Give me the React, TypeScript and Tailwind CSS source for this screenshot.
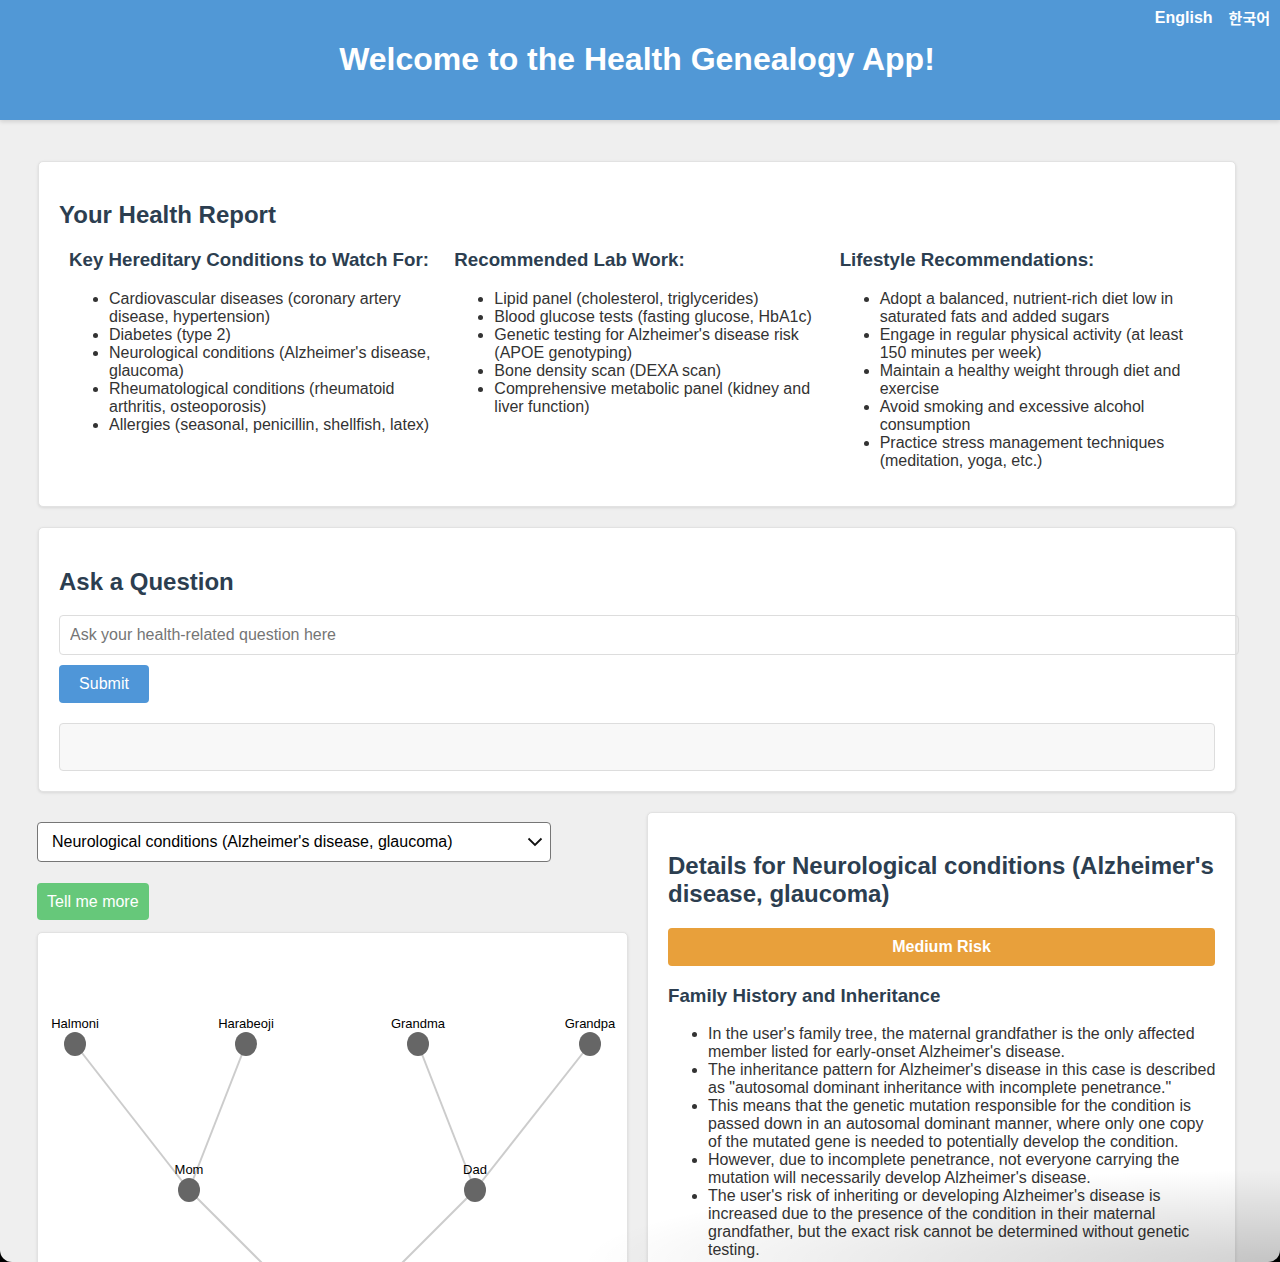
import React, { useState } from 'react';

const conditions = [
  'Cardiovascular diseases (coronary artery disease, hypertension)',
  'Diabetes (type 2)',
  "Neurological conditions (Alzheimer's disease, glaucoma)",
  'Rheumatological conditions (rheumatoid arthritis, osteoporosis)',
  'Allergies (seasonal, penicillin, shellfish, latex)',
];

const labWork = [
  'Lipid panel (cholesterol, triglycerides)',
  'Blood glucose tests (fasting glucose, HbA1c)',
  "Genetic testing for Alzheimer's disease risk (APOE genotyping)",
  'Bone density scan (DEXA scan)',
  'Comprehensive metabolic panel (kidney and liver function)',
];

const lifestyle = [
  'Adopt a balanced, nutrient-rich diet low in saturated fats and added sugars',
  'Engage in regular physical activity (at least 150 minutes per week)',
  'Maintain a healthy weight through diet and exercise',
  'Avoid smoking and excessive alcohol consumption',
  'Practice stress management techniques (meditation, yoga, etc.)',
];

const inheritance = [
  "In the user's family tree, the maternal grandfather is the only affected member listed for early-onset Alzheimer's disease.",
  'The inheritance pattern for Alzheimer\'s disease in this case is described as "autosomal dominant inheritance with incomplete penetrance."',
  'This means that the genetic mutation responsible for the condition is passed down in an autosomal dominant manner, where only one copy of the mutated gene is needed to potentially develop the condition.',
  "However, due to incomplete penetrance, not everyone carrying the mutation will necessarily develop Alzheimer's disease.",
  "The user's risk of inheriting or developing Alzheimer's disease is increased due to the presence of the condition in their maternal grandfather, but the exact risk cannot be determined without genetic testing.",
];

// tree node positions, relative to the tree card
const nodes = [
  { id: 'halmoni', label: 'Halmoni', x: 37, y: 111 },
  { id: 'harabeoji', label: 'Harabeoji', x: 208, y: 111 },
  { id: 'grandma', label: 'Grandma', x: 380, y: 111 },
  { id: 'grandpa', label: 'Grandpa', x: 552, y: 111 },
  { id: 'mom', label: 'Mom', x: 151, y: 257 },
  { id: 'dad', label: 'Dad', x: 437, y: 257 },
  { id: 'me', label: '', x: 294, y: 400 },
];

const links = [
  ['halmoni', 'mom'],
  ['harabeoji', 'mom'],
  ['grandma', 'dad'],
  ['grandpa', 'dad'],
  ['mom', 'me'],
  ['dad', 'me'],
];

const ReportColumn = ({ title, items }: { title: string; items: string[] }) => (
  <div className="px-[10px]">
    <h3 className="text-[18.72px] leading-[21px] font-bold text-[#2c3e50] mb-5">{title}</h3>
    <ul className="list-disc pl-10 mb-4 text-[16px] leading-[18px] text-[#333]">
      {items.map((item, i) => (
        <li key={i}>{item}</li>
      ))}
    </ul>
  </div>
);

const FamilyTree = () => {
  const find = (id: string) => nodes.find((n) => n.id === id)!;
  return (
    <svg width="589" height="500" className="block">
      {links.map(([a, b]) => {
        const s = find(a);
        const t = find(b);
        return <line key={a + b} x1={s.x} y1={s.y} x2={t.x} y2={t.y} stroke="#cccccc" strokeWidth="2" />;
      })}
      {nodes.map((n) => (
        <g key={n.id}>
          <ellipse cx={n.x} cy={n.y} rx="11" ry="12" fill="#666666" />
          {n.label && (
            <text x={n.x} y={n.y - 16} textAnchor="middle" fontSize="13" fill="#000" fontFamily="'Liberation Sans', Arial, sans-serif">
              {n.label}
            </text>
          )}
        </g>
      ))}
    </svg>
  );
};

export default function App() {
  const [question, setQuestion] = useState('');
  const [selected, setSelected] = useState(conditions[2]);

  return (
    <div className="bg-black h-[1262px] overflow-hidden" style={{ fontFamily: "'Liberation Sans', Arial, sans-serif" }}>
      <div className="relative h-[1262px] bg-[#efefef] rounded-b-[12px] overflow-hidden">
        {/* Header */}
        <header className="relative h-[120px] bg-[#5198d6] shadow-[0_2px_4px_rgba(0,0,0,0.12)] flex items-center justify-center">
          <h1 className="text-[32px] leading-[37px] font-bold text-white -mt-[2px] -ml-[6px]">Welcome to the Health Genealogy App!</h1>
          <div className="absolute top-[8px] right-[10px] flex gap-4 text-[16px] font-bold text-white leading-[20px]">
            <button>English</button>
            <button style={{ fontFamily: "'Noto Sans CJK KR', sans-serif" }} className="text-[15px]">한국어</button>
          </div>
        </header>

        <main className="ml-[37px] w-[1199px] pt-[41px]">
          {/* Health report */}
          <section className="bg-white border border-[#e2e2e2] rounded-[5px] shadow-[0_1px_3px_rgba(0,0,0,0.1)] px-5 pt-5 pb-5 ml-[1px]">
            <h2 className="text-[24px] leading-[28px] font-bold text-[#2c3e50] mt-[19px] mb-5">Your Health Report</h2>
            <div className="grid grid-cols-3">
              <ReportColumn title="Key Hereditary Conditions to Watch For:" items={conditions} />
              <ReportColumn title="Recommended Lab Work:" items={labWork} />
              <ReportColumn title="Lifestyle Recommendations:" items={lifestyle} />
            </div>
          </section>

          {/* Ask a question */}
          <section className="mt-5 bg-white border border-[#e2e2e2] rounded-[5px] shadow-[0_1px_3px_rgba(0,0,0,0.1)] p-5 ml-[1px]">
            <h2 className="text-[24px] leading-[28px] font-bold text-[#2c3e50] mt-5 mb-[19px]">Ask a Question</h2>
            <input
              value={question}
              onChange={(e) => setQuestion(e.target.value)}
              placeholder="Ask your health-related question here"
              className="block w-[1180px] h-[40px] px-[10px] border border-[#dddddd] rounded-[4px] text-[16px] text-[#333] placeholder:text-[#757575] outline-none"
            />
            <button className="mt-[10px] h-[38px] w-[90px] rounded-[4px] bg-[#4f96d8] text-white text-[16px]">Submit</button>
            <div className="mt-5 h-[48px] bg-[#f8f8f8] border border-[#dddddd] rounded-[4px]" />
          </section>

          {/* Condition details */}
          <div className="mt-5 grid grid-cols-[591px_588px] gap-5">
            <div className="pt-[10px]">
              <div className="relative w-[514px]">
                <select
                  value={selected}
                  onChange={(e) => setSelected(e.target.value)}
                  className="appearance-none w-full h-[40px] pl-[14px] pr-10 border border-[#767676] rounded-[4px] bg-white text-[16px] text-black outline-none"
                >
                  {conditions.map((c) => (
                    <option key={c}>{c}</option>
                  ))}
                </select>
                <svg className="absolute right-[8px] top-[13px] pointer-events-none" width="16" height="14" viewBox="0 0 16 14">
                  <path d="M1.5 3.5 L8 10 L14.5 3.5" fill="none" stroke="#111" strokeWidth="1.8" />
                </svg>
              </div>
              <button className="mt-[21px] h-[37px] px-[10px] rounded-[4px] bg-[#66c87a] text-white text-[16px]">Tell me more</button>
              <div className="mt-[12px] h-[500px] bg-white border border-[#e2e2e2] rounded-[5px] shadow-[0_1px_3px_rgba(0,0,0,0.1)] overflow-hidden">
                <FamilyTree />
              </div>
            </div>

            <div className="bg-white border border-[#e2e2e2] rounded-[5px] shadow-[0_1px_3px_rgba(0,0,0,0.1)] p-5 h-[560px] -ml-[1px]">
              <h2 className="text-[24px] leading-[28px] font-bold text-[#2c3e50] mt-[19px] mb-5">
                Details for Neurological conditions (Alzheimer's disease, glaucoma)
              </h2>
              <div className="h-[38px] rounded-[4px] bg-[#e8a03b] text-white font-bold text-[16px] flex items-center justify-center">
                Medium Risk
              </div>
              <h3 className="mt-[19px] text-[18.72px] leading-[21px] font-bold text-[#2c3e50]">Family History and Inheritance</h3>
              <ul className="mt-[19px] -mr-1 list-disc pl-10 text-[16px] leading-[18px] text-[#333]">
                {inheritance.map((t, i) => (
                  <li key={i}>{t}</li>
                ))}
              </ul>
            </div>
          </div>
        </main>

        {/* window shadow at the bottom right */}
        <div className="absolute right-0 bottom-0 w-[760px] h-[100px] pointer-events-none bg-[radial-gradient(ellipse_at_bottom_right,rgba(0,0,0,0.18),rgba(0,0,0,0)_65%)]" />
      </div>
    </div>
  );
}
